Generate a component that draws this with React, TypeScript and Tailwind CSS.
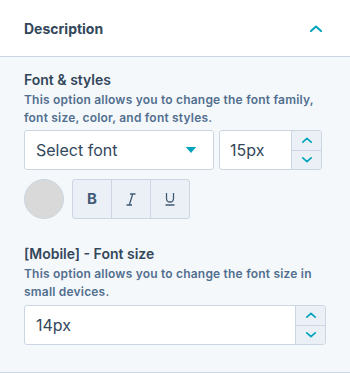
import React from "react";

const Chevron = ({ up, className }: { up?: boolean; className?: string }) => (
  <svg viewBox="0 0 12 7" className={className} fill="none">
    <path
      d={up ? "M1 6 L6 1.5 L11 6" : "M1 1 L6 5.5 L11 1"}
      stroke="currentColor"
      strokeWidth="2"
      strokeLinecap="round"
      strokeLinejoin="round"
    />
  </svg>
);

const Stepper = () => (
  <div className="flex w-[30px] flex-col border-l border-[#cbd6e2] bg-[#eaf0f6]">
    <button className="flex flex-1 items-center justify-center border-b border-[#cbd6e2] text-[#00a4bd]">
      <Chevron up className="h-[6px] w-[10px]" />
    </button>
    <button className="flex flex-1 items-center justify-center text-[#00a4bd]">
      <Chevron className="h-[6px] w-[10px]" />
    </button>
  </div>
);

const Field = ({ title, text }: { title: string; text: string }) => (
  <div>
    <div className="text-[14px] font-semibold leading-5 text-[#33475b]">{title}</div>
    <p className="mt-[1px] text-[12px] font-semibold leading-[18px] tracking-[0.2px] text-[#516f90]">{text}</p>
  </div>
);

export default function App() {
  return (
    <div className="w-[350px] bg-white font-['Inter',sans-serif]">
      <div className="flex h-[57px] items-center justify-between border-b border-[#cbd6e2] px-6">
        <span className="text-[14px] font-bold text-[#33475b]">Description</span>
        <Chevron up className="mr-[4px] h-[7px] w-[12px] text-[#00a4bd]" />
      </div>
      <div className="border-b border-[#cbd6e2] bg-[#f5f8fa] px-6 pb-[27px] pt-[13px]">
        <Field
          title="Font & styles"
          text="This option allows you to change the font family, font size, color, and font styles."
        />
        <div className="mt-[3px] flex gap-[5px]">
          <div className="flex h-10 w-[190px] items-center justify-between rounded-[3px] border border-[#cbd6e2] bg-white pl-[11px] pr-4">
            <span className="text-[16px] text-[#33475b]">Select font</span>
            <svg viewBox="0 0 12 7" className="h-[6px] w-[12px] text-[#00a4bd]">
              <path d="M0 0 H12 L6 7 Z" fill="currentColor" />
            </svg>
          </div>
          <div className="flex h-10 w-[103px] overflow-hidden rounded-[3px] border border-[#cbd6e2] bg-white">
            <span className="flex flex-1 items-center pl-[10px] text-[16px] text-[#33475b]">15px</span>
            <Stepper />
          </div>
        </div>
        <div className="mt-[9px] flex items-center gap-2">
          <div className="h-10 w-10 rounded-full border border-[#cbd6e2] bg-[#d9d9d9]" />
          <div className="flex h-10 overflow-hidden rounded-[3px] border border-[#cbd6e2] bg-[#eaf0f6] text-[#425b76]">
            <div className="flex w-[39px] items-center justify-center border-r border-[#cbd6e2] text-[15px] font-bold">B</div>
            <div className="flex w-[39px] items-center justify-center border-r border-[#cbd6e2]">
              <svg viewBox="0 0 10 13" className="h-[13px] w-[10px]" fill="none" stroke="currentColor" strokeWidth="1.3">
                <path d="M4 1 H9.5 M0.5 12 H6 M6.7 1 L3.3 12" />
              </svg>
            </div>
            <div className="flex w-[38px] items-center justify-center">
              <svg viewBox="0 0 10 14" className="h-[14px] w-[10px]" fill="none" stroke="currentColor" strokeWidth="1.3">
                <path d="M1.5 1 V6.5 Q1.5 10 5 10 Q8.5 10 8.5 6.5 V1 M0.5 13 H9.5" />
              </svg>
            </div>
          </div>
        </div>
        <div className="mt-[25px]">
          <Field
            title="[Mobile] - Font size"
            text="This option allows you to change the font size in small devices."
          />
          <div className="mt-[4px] flex h-10 w-[302px] overflow-hidden rounded-[3px] border border-[#cbd6e2] bg-white">
            <span className="flex flex-1 items-center pl-[11px] text-[16px] text-[#33475b]">14px</span>
            <Stepper />
          </div>
        </div>
      </div>
    </div>
  );
}
